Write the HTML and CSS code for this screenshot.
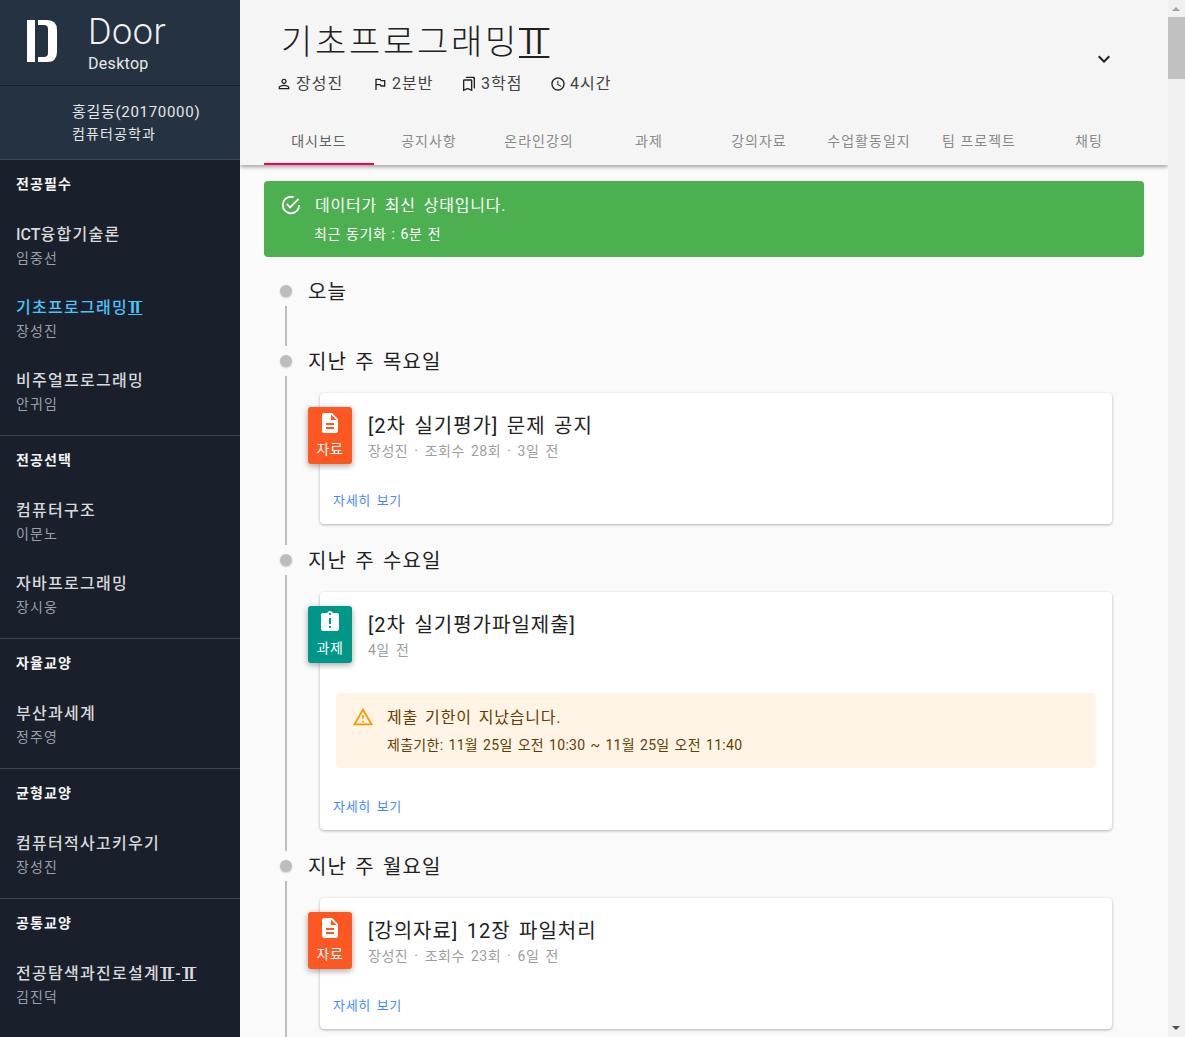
FILE: index.html
```html
<!DOCTYPE html>
<html lang="ko">
<head>
<meta charset="UTF-8">
<meta name="viewport" content="width=device-width, initial-scale=1.0">
<title>Door Desktop</title>
<link rel="stylesheet" href="styles.css">
</head>
<body>
<div class="app">
    <aside class="sidebar">
        <div class="brand">
            <svg class="brand-logo" width="30" height="42" viewBox="0 0 30 42">
                <rect x="0" y="0" width="8" height="42" fill="#fff"/>
                <path fill="#fff" fill-rule="evenodd" d="M11 0h9q10 0 10 10v22q0 10-10 10h-9v-5h6q4 0 4-4V9q0-4-4-4h-6z"/>
            </svg>
            <div class="brand-text">
                <div class="brand-name">Door</div>
                <div class="brand-sub">Desktop</div>
            </div>
        </div>
        <div class="profile">
            <div class="profile-name">홍길동(20170000)</div>
            <div class="profile-dept">컴퓨터공학과</div>
        </div>
        <nav class="courses">
            <section class="group">
                <h3>전공필수</h3>
                <a class="course"><b><span class="latin">ICT</span>융합기술론</b><span>임중선</span></a>
                <a class="course active"><b>기초프로그래밍<em class="roman">Ⅱ</em></b><span>장성진</span></a>
                <a class="course"><b>비주얼프로그래밍</b><span>안귀임</span></a>
            </section>
            <section class="group">
                <h3>전공선택</h3>
                <a class="course"><b>컴퓨터구조</b><span>이문노</span></a>
                <a class="course"><b>자바프로그래밍</b><span>장시웅</span></a>
            </section>
            <section class="group">
                <h3>자율교양</h3>
                <a class="course"><b>부산과세계</b><span>정주영</span></a>
            </section>
            <section class="group">
                <h3>균형교양</h3>
                <a class="course"><b>컴퓨터적사고키우기</b><span>장성진</span></a>
            </section>
            <section class="group">
                <h3>공통교양</h3>
                <a class="course"><b>전공탐색과진로설계<em class="roman">Ⅱ</em>-<em class="roman">Ⅱ</em></b><span>김진덕</span></a>
            </section>
        </nav>
    </aside>

    <main class="main">
        <header class="topbar">
            <div class="course-head">
                <div>
                    <h1>기초프로그래밍<em class="roman">Ⅱ</em></h1>
                    <ul class="facts">
                        <li class="fact-prof"><svg viewBox="0 0 24 24"><path d="M12 5.9c1.16 0 2.1.94 2.1 2.1s-.94 2.1-2.1 2.1S9.9 9.16 9.9 8s.94-2.1 2.1-2.1m0 9c2.97 0 6.1 1.46 6.1 2.1v1.1H5.9V17c0-.64 3.13-2.1 6.1-2.1M12 4C9.79 4 8 5.79 8 8s1.79 4 4 4 4-1.79 4-4-1.79-4-4-4zm0 9c-2.67 0-8 1.34-8 4v3h16v-3c0-2.66-5.33-4-8-4z"/></svg>장성진</li>
                        <li class="fact-class"><svg viewBox="0 0 24 24"><path d="M14 6l-1-2H5v17h2v-7h5l1 2h7V6h-6zm4 8h-4l-1-2H7V6h5l1 2h5v6z"/></svg>2분반</li>
                        <li class="fact-credit"><svg viewBox="0 0 24 24"><path d="M15 7v12.97l-4.21-1.81-.79-.34-.79.34L5 19.97V7h10m4-6H8.99C7.89 1 7 1.9 7 3h10c1.1 0 2 .9 2 2v13l2 1V3c0-1.1-.9-2-2-2zm-4 4H5c-1.1 0-2 .9-2 2v16l7-3 7 3V7c0-1.1-.9-2-2-2z"/></svg>3학점</li>
                        <li><svg viewBox="0 0 24 24"><path d="M11.99 2C6.47 2 2 6.48 2 12s4.47 10 9.99 10C17.52 22 22 17.52 22 12S17.52 2 11.99 2zM12 20c-4.42 0-8-3.58-8-8s3.58-8 8-8 8 3.58 8 8-3.58 8-8 8zm.5-13H11v6l5.25 3.15.75-1.23-4.5-2.67z"/></svg>4시간</li>
                    </ul>
                </div>
                <svg class="expand" viewBox="0 0 24 24"><path d="M16.59 8.59L12 13.17 7.41 8.59 6 10l6 6 6-6z"/></svg>
            </div>
            <div class="tabs">
                <a class="tab active">대시보드</a>
                <a class="tab">공지사항</a>
                <a class="tab">온라인강의</a>
                <a class="tab">과제</a>
                <a class="tab">강의자료</a>
                <a class="tab">수업활동일지</a>
                <a class="tab">팀 프로젝트</a>
                <a class="tab">채팅</a>
            </div>
        </header>

        <div class="content">
            <div class="alert-ok">
                <svg viewBox="0 0 24 24"><path d="M20,12A8,8 0 0,1 12,20A8,8 0 0,1 4,12A8,8 0 0,1 12,4C12.76,4 13.5,4.11 14.2,4.31L15.77,2.74C14.61,2.26 13.34,2 12,2A10,10 0 0,0 2,12A10,10 0 0,0 12,22A10,10 0 0,0 22,12M7.91,10.08L6.5,11.5L11,16L21,6L19.59,4.58L11,13.17L7.91,10.08Z"/></svg>
                <div>
                    <div class="alert-title">데이터가 최신 상태입니다.</div>
                    <div class="alert-sub">최근 동기화 : 6분 전</div>
                </div>
            </div>

            <div class="timeline">
                <div class="day"><i class="dot"></i>오늘</div>
                <div class="day-body empty"></div>

                <div class="day"><i class="dot"></i>지난 주 목요일</div>
                <div class="day-body">
                    <article class="card">
                        <div class="badge badge-file">
                            <svg viewBox="0 0 24 24"><path d="M14 2H6c-1.1 0-1.99.9-1.99 2L4 20c0 1.1.89 2 1.99 2H18c1.1 0 2-.9 2-2V8l-6-6zm2 16H8v-2h8v2zm0-4H8v-2h8v2zm-3-5V3.5L18.5 9H13z"/></svg>
                            자료
                        </div>
                        <h4>[2차 실기평가] 문제 공지</h4>
                        <p class="meta">장성진 · 조회수 28회 · 3일 전</p>
                        <a class="more">자세히 보기</a>
                    </article>
                </div>

                <div class="day"><i class="dot"></i>지난 주 수요일</div>
                <div class="day-body">
                    <article class="card">
                        <div class="badge badge-task">
                            <svg viewBox="0 0 24 24"><path d="M19 3h-4.18C14.4 1.84 13.3 1 12 1c-1.3 0-2.4.84-2.82 2H5c-1.1 0-2 .9-2 2v14c0 1.1.9 2 2 2h14c1.1 0 2-.9 2-2V5c0-1.1-.9-2-2-2zm-6 15h-2v-2h2v2zm0-4h-2V8h2v6zm-1-9c-.55 0-1-.45-1-1s.45-1 1-1 1 .45 1 1-.45 1-1 1z"/></svg>
                            과제
                        </div>
                        <h4>[2차 실기평가파일제출]</h4>
                        <p class="meta">4일 전</p>
                        <div class="alert-warn">
                            <svg viewBox="0 0 24 24"><path d="M12 5.99L19.53 19H4.47L12 5.99M12 2L1 21h22L12 2zm1 14h-2v2h2v-2zm0-6h-2v4h2v-4z"/></svg>
                            <div>
                                <div class="warn-title">제출 기한이 지났습니다.</div>
                                <div class="warn-sub">제출기한: 11월 25일 오전 10:30 ~ 11월 25일 오전 11:40</div>
                            </div>
                        </div>
                        <a class="more">자세히 보기</a>
                    </article>
                </div>

                <div class="day"><i class="dot"></i>지난 주 월요일</div>
                <div class="day-body">
                    <article class="card">
                        <div class="badge badge-file">
                            <svg viewBox="0 0 24 24"><path d="M14 2H6c-1.1 0-1.99.9-1.99 2L4 20c0 1.1.89 2 1.99 2H18c1.1 0 2-.9 2-2V8l-6-6zm2 16H8v-2h8v2zm0-4H8v-2h8v2zm-3-5V3.5L18.5 9H13z"/></svg>
                            자료
                        </div>
                        <h4>[강의자료] 12장 파일처리</h4>
                        <p class="meta">장성진 · 조회수 23회 · 6일 전</p>
                        <a class="more">자세히 보기</a>
                    </article>
                </div>
            </div>
        </div>
    </main>

    <div class="scrollbar">
        <i class="arrow-up"></i>
        <div class="thumb"></div>
        <i class="arrow-down"></i>
    </div>
</div>
</body>
</html>
```

FILE: styles.css
```css
* {
    box-sizing: border-box;
}
html, body {
    height: 100%;
}
body {
    margin: 0;
    overflow: hidden;
    font-family: 'Roboto', 'Noto Sans CJK KR', sans-serif;
    color: #212121;
    background: #fafafa;
}
.app {
    display: flex;
    height: 100vh;
    overflow: hidden;
}
/* the installed fonts draw this numeral without its top and bottom bars */
.roman {
    display: inline-block;
    box-sizing: content-box;
    width: 0.55em;
    margin-right: 0.4em;
    border-top: 0.07em solid currentColor;
    border-bottom: 0.07em solid currentColor;
    font-family: 'DejaVu Sans', sans-serif;
    font-style: normal;
    line-height: 0.76em;
    letter-spacing: 0;
    text-align: center;
    transform: scaleX(1.6);
    transform-origin: left center;
}
.latin {
    letter-spacing: 0;
}

/* sidebar */
.sidebar {
    width: 240px;
    flex: none;
    color: #fff;
    background: #19202c;
    overflow: hidden;
}
.brand {
    display: flex;
    height: 86px;
    padding: 20px 0 0 27px;
    background: #253241;
    border-bottom: 1px solid #19202c;
}
.brand-logo {
    flex: none;
}
.brand-text {
    margin-left: 31px;
    margin-top: -8px;
}
.brand-name {
    font-size: 36px;
    font-weight: 300;
    line-height: 40px;
    letter-spacing: 0.5px;
    color: #f1f1f1;
}
.brand-sub {
    font-size: 16px;
    line-height: 24px;
    letter-spacing: 0.3px;
    color: #e8e8e8;
}
.profile {
    height: 74px;
    padding: 15px 0 0 72px;
    background: #253241;
    border-bottom: 1px solid #3b4656;
    font-size: 15px;
    line-height: 22px;
    color: #e6e6e6;
}
.profile-name {
    letter-spacing: 0.7px;
}
.profile-dept {
    font-size: 14px;
    letter-spacing: 1.1px;
}
.group {
    padding-bottom: 12px;
    border-bottom: 1px solid #3b4656;
}
.group:last-child {
    border-bottom: 0;
}
.group h3 {
    margin: 0;
    padding: 13px 16px 0;
    height: 44px;
    font-size: 14px;
    line-height: 22px;
    font-weight: 700;
    letter-spacing: 1.1px;
    color: #f5f5f5;
}
.course {
    display: block;
    height: 73px;
    padding: 19px 0 0 16px;
    white-space: nowrap;
}
.course b {
    display: block;
    height: 24px;
    font-size: 16px;
    line-height: 24px;
    font-weight: 500;
    letter-spacing: 1.28px;
    color: #d9d9d9;
}
.course > span {
    display: block;
    font-size: 14px;
    line-height: 22px;
    letter-spacing: 1.1px;
    color: #9a9fa6;
}
.course.active b {
    color: #4fc3f7;
}

/* course header */
.main {
    flex: 1;
    min-width: 0;
    background: #fafafa;
    overflow: hidden;
}
.topbar {
    position: relative;
    height: 165px;
    background: #f5f5f5;
    box-shadow: 0 2px 4px rgba(0, 0, 0, 0.35);
}
.course-head {
    display: flex;
    justify-content: space-between;
    height: 117px;
    padding: 19px 52px 0 41px;
}
.course-head h1 {
    height: 46px;
    margin: 0;
    font-size: 34px;
    line-height: 46px;
    font-weight: 300;
    letter-spacing: 2.7px;
    color: #212121;
}
.facts {
    display: flex;
    list-style: none;
    margin: 7px 0 0 -5px;
    padding: 0;
    font-size: 16px;
    line-height: 24px;
    letter-spacing: 1px;
    color: #424242;
}
.facts li {
    display: flex;
    align-items: center;
}
.facts svg {
    width: 16px;
    height: 16px;
    margin-right: 4px;
    fill: #212121;
}
.fact-prof {
    width: 96px;
}
.fact-class {
    width: 89px;
}
.fact-credit {
    width: 89px;
}
.expand {
    width: 24px;
    height: 24px;
    margin-top: 28px;
    fill: #212121;
}
.tabs {
    display: flex;
    height: 48px;
    margin-left: 24px;
}
.tab {
    width: 110px;
    font-size: 14px;
    line-height: 48px;
    text-align: center;
    letter-spacing: 1px;
    color: #8a8a8a;
}
.tab.active {
    color: #616161;
    border-bottom: 2px solid #f50057;
}

/* content */
.content {
    padding: 16px 24px 0;
}
.alert-ok {
    display: flex;
    height: 76px;
    padding: 13px 16px;
    color: #fff;
    background: #4caf50;
    border-radius: 4px;
}
.alert-ok svg {
    width: 22px;
    height: 22px;
    margin: 0 13px 0 0;
    fill: #fff;
}
.alert-title {
    font-size: 16px;
    line-height: 24px;
    letter-spacing: 0.8px;
    word-spacing: 3px;
}
.alert-sub {
    margin-top: 5px;
    margin-left: -1px;
    font-size: 14px;
    line-height: 22px;
    letter-spacing: 0.6px;
    word-spacing: 1px;
}

/* timeline */
.timeline {
    margin-top: 19px;
    padding-right: 32px;
}
.day {
    display: flex;
    align-items: center;
    height: 30px;
    padding-bottom: 1px;
    font-size: 20px;
    letter-spacing: 1px;
    word-spacing: 2.5px;
    color: #212121;
}
.dot {
    width: 12px;
    height: 12px;
    margin: 1px 16px 0;
    border-radius: 50%;
    background: #bdbdbd;
    box-shadow: 0 1px 2px rgba(0, 0, 0, 0.2);
}
.day-body {
    margin-left: 21px;
    padding: 17px 0 21px 33px;
    border-left: 2px solid #bdbdbd;
}
.day-body.empty {
    height: 40px;
    padding: 0;
}
.card {
    position: relative;
    padding-top: 18px;
    background: #fff;
    border-radius: 4px;
    box-shadow: 0 1px 3px rgba(0, 0, 0, 0.3);
}
.badge {
    position: absolute;
    left: -12px;
    top: 14px;
    width: 44px;
    height: 57px;
    padding-top: 4px;
    font-size: 14px;
    line-height: 20px;
    letter-spacing: 0.5px;
    text-align: center;
    color: #fff;
    border-radius: 3px;
    box-shadow: 0 2px 6px rgba(0, 0, 0, 0.35);
}
.badge svg {
    display: block;
    width: 24px;
    height: 24px;
    margin: 0 auto 4px;
    fill: #fff;
}
.badge-file {
    background: #ff5722;
}
.badge-task {
    background: #009688;
}
.card h4 {
    margin: 0;
    padding-left: 48px;
    font-size: 20px;
    line-height: 30px;
    font-weight: 400;
    letter-spacing: 1px;
    word-spacing: 2.5px;
    color: #212121;
}
.meta {
    margin: 0;
    padding-left: 48px;
    font-size: 14px;
    line-height: 20px;
    letter-spacing: 0.5px;
    word-spacing: 2.2px;
    color: #9e9e9e;
}
.more {
    display: block;
    padding: 30px 13px 13px;
    font-size: 13px;
    line-height: 20px;
    letter-spacing: 0.7px;
    word-spacing: 1.8px;
    color: #448aff;
}
.alert-warn {
    display: flex;
    height: 75px;
    margin: 33px 16px 0;
    padding: 13px 16px;
    color: #663c00;
    background: #fff4e5;
    border-radius: 4px;
}
.alert-warn svg {
    width: 22px;
    height: 22px;
    margin: 0 13px 0 0;
    fill: #ff9800;
}
.warn-title {
    font-size: 16px;
    line-height: 24px;
    letter-spacing: 0.8px;
    word-spacing: 2.3px;
}
.warn-sub {
    margin-top: 4px;
    font-size: 14px;
    line-height: 22px;
    letter-spacing: 0.3px;
    word-spacing: 1.3px;
}
.alert-warn + .more {
    padding-top: 29px;
}

/* window scrollbar */
.scrollbar {
    position: relative;
    width: 17px;
    flex: none;
    background: #f1f1f1;
}
.thumb {
    position: absolute;
    top: 17px;
    left: 0;
    width: 17px;
    height: 62px;
    background: #c1c1c1;
}
.arrow-up, .arrow-down {
    position: absolute;
    left: 4px;
    width: 0;
    height: 0;
    border-left: 4px solid transparent;
    border-right: 4px solid transparent;
}
.arrow-up {
    top: 7px;
    border-bottom: 4px solid #a3a3a3;
}
.arrow-down {
    bottom: 7px;
    border-top: 4px solid #505050;
}
```
